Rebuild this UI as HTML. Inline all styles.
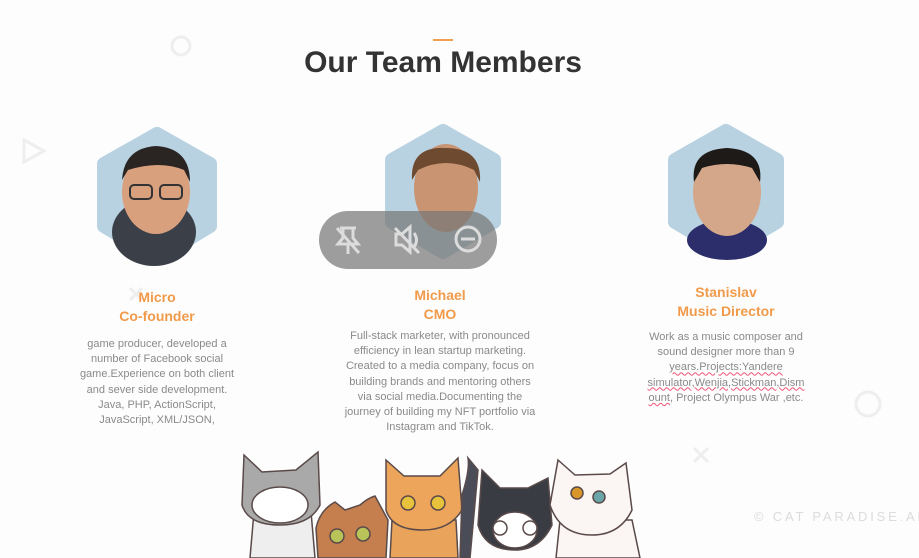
<!DOCTYPE html>
<html><head><meta charset="utf-8"><style>
*{margin:0;padding:0;box-sizing:border-box}
body{width:919px;height:558px;overflow:hidden;background:#fdfdfd;font-family:"Liberation Sans",sans-serif;position:relative}
.a{position:absolute}
.name{position:absolute;text-align:center;color:#f19a4a;font-weight:bold;font-size:14px;line-height:19px}
.desc{position:absolute;text-align:center;color:#8a8a8a;font-size:11px;line-height:15.2px;white-space:nowrap}
.u{text-decoration:underline wavy #e57;text-decoration-thickness:1px}
</style></head><body>
<div class="a" style="left:433px;top:39px;width:20px;height:2px;background:#f0a050"></div>
<div class="a" style="left:0;width:886px;top:46px;text-align:center;font-size:30px;font-weight:bold;color:#333">Our Team Members</div>
<svg class="a" style="left:0;top:0" width="919" height="558">
<circle cx="181" cy="46" r="9" fill="none" stroke="#eee" stroke-width="3"/>
<circle cx="868" cy="404" r="12" fill="none" stroke="#eee" stroke-width="3"/>
<path d="M24 140 L44 151 L24 162Z" fill="none" stroke="#eee" stroke-width="3"/>
<path d="M694 448 L708 462 M708 448 L694 462" stroke="#eee" stroke-width="3"/>
<path d="M130 288 L142 300 M142 288 L130 300" stroke="#eee" stroke-width="3"/>
<g fill="#b8d2e2" stroke="#b8d2e2" stroke-width="14" stroke-linejoin="round">
<path d="M157 134 L210 164 L210 226 L157 258 L104 226 L104 164Z"/>
<path d="M443 131 L494 160 L494 222 L443 252 L392 222 L392 160Z"/>
<path d="M726 131 L777 160 L777 222 L726 252 L675 222 L675 160Z"/>
</g>
<ellipse cx="154" cy="232" rx="42" ry="34" fill="#3a3f48"/>
<ellipse cx="156" cy="192" rx="34" ry="42" fill="#d9a07e"/>
<path d="M122 180 Q124 148 156 146 Q190 148 190 182 L184 170 Q160 160 128 170Z" fill="#2a2522"/>
<rect x="130" y="185" width="22" height="14" rx="4" fill="none" stroke="#333" stroke-width="2"/>
<rect x="160" y="185" width="22" height="14" rx="4" fill="none" stroke="#333" stroke-width="2"/>
<ellipse cx="446" cy="188" rx="32" ry="44" fill="#c99472"/>
<path d="M412 180 Q410 146 446 148 Q482 148 480 182 L474 170 Q446 156 418 170Z" fill="#6e4a30"/>
<ellipse cx="727" cy="240" rx="40" ry="20" fill="#2b2e6a"/>
<ellipse cx="727" cy="192" rx="34" ry="44" fill="#d4a78a"/>
<path d="M694 182 Q690 150 727 148 Q764 150 760 182 L752 168 Q727 160 702 168Z" fill="#1e1a18"/>
<g stroke="#5a4a4a" stroke-width="1.5">
<path d="M250 558 L255 500 L310 500 L315 558Z" fill="#eee"/>
<path d="M244 455 L262 472 L296 470 L318 452 L320 505 Q310 525 280 525 Q248 525 242 505Z" fill="#a9a9a9"/>
<ellipse cx="280" cy="505" rx="28" ry="18" fill="#fff"/>
<path d="M390 558 L392 520 L456 520 L458 558Z" fill="#e9a35a"/>
<path d="M386 460 L404 476 L440 476 L458 458 L462 510 Q450 530 423 530 Q392 530 386 510Z" fill="#eca55a"/>
<circle cx="408" cy="503" r="7" fill="#e8c23b"/><circle cx="438" cy="503" r="7" fill="#e8c23b"/>
<path d="M460 558 L462 495 Q470 470 468 458 L478 470 L470 558Z" fill="#4a4d58"/>
<path d="M482 470 L500 488 L528 488 L548 478 L552 525 Q540 550 515 550 Q485 550 478 525Z" fill="#3a3c44"/>
<ellipse cx="515" cy="530" rx="22" ry="18" fill="#fff"/>
<circle cx="500" cy="528" r="7" fill="#fff"/><circle cx="530" cy="528" r="7" fill="#fff"/>
<path d="M556 558 L560 520 L632 520 L640 558Z" fill="#fbf5f3"/>
<path d="M558 460 L575 475 L610 474 L626 463 L632 510 Q620 535 592 535 Q560 535 550 505Z" fill="#fbf5f3"/>
<circle cx="577" cy="493" r="6" fill="#d9962a"/><circle cx="599" cy="497" r="6" fill="#6aa5a8"/>
<path d="M318 558 L316 528 Q320 510 335 502 L345 510 L360 505 Q368 498 375 496 L388 520 L386 558Z" fill="#c57f4e"/>
<circle cx="337" cy="536" r="7" fill="#b8c45a"/><circle cx="363" cy="534" r="7" fill="#b8c45a"/>
</g>
<rect x="319" y="211" width="178" height="58" rx="29" fill="#777" fill-opacity="0.72"/>
<g stroke="#dcdcdc" stroke-width="3" fill="none">
<path d="M340 228 L356 228 M343 228 L343 238 L338 244 L358 244 L353 238 L353 228 M348 244 L348 254" />
<path d="M337 228 L359 253" />
<path d="M396 234 L402 234 L410 227 L410 252 L402 245 L396 245Z M414 233 Q419 240 414 247" />
<path d="M395 228 L419 253"/>
<circle cx="468" cy="239" r="12"/><path d="M461 239 L475 239"/>
</g>
</svg>
<div class="name" style="left:57px;width:200px;top:288px">Micro<br>Co-founder</div>
<div class="desc" style="left:57px;width:200px;top:337px">game producer, developed a<br>number of Facebook social<br>game.Experience on both client<br>and sever side development.<br>Java, PHP, ActionScript,<br>JavaScript, XML/JSON,</div>
<div class="name" style="left:340px;width:200px;top:286px">Michael<br>CMO</div>
<div class="desc" style="left:340px;width:200px;top:329px">Full-stack marketer, with pronounced<br>efficiency in lean startup marketing.<br>Created to a media company, focus on<br>building brands and mentoring others<br>via social media.Documenting the<br>journey of building my NFT portfolio via<br>Instagram and TikTok.</div>
<div class="name" style="left:626px;width:200px;top:283px">Stanislav<br>Music Director</div>
<div class="desc" style="left:626px;width:200px;top:330px">Work as a music composer and<br>sound designer more than 9<br><span class="u">years.Projects:Yandere</span><br><span class="u">simulator,Wenjia,Stickman,Dism</span><br><span class="u">ount</span>, Project Olympus War ,etc.</div>
<div class="a" style="left:754px;top:509px;font-size:13px;letter-spacing:2.8px;color:#dcdcdc;white-space:nowrap">© CAT PARADISE.ALL R</div>
</body></html>
